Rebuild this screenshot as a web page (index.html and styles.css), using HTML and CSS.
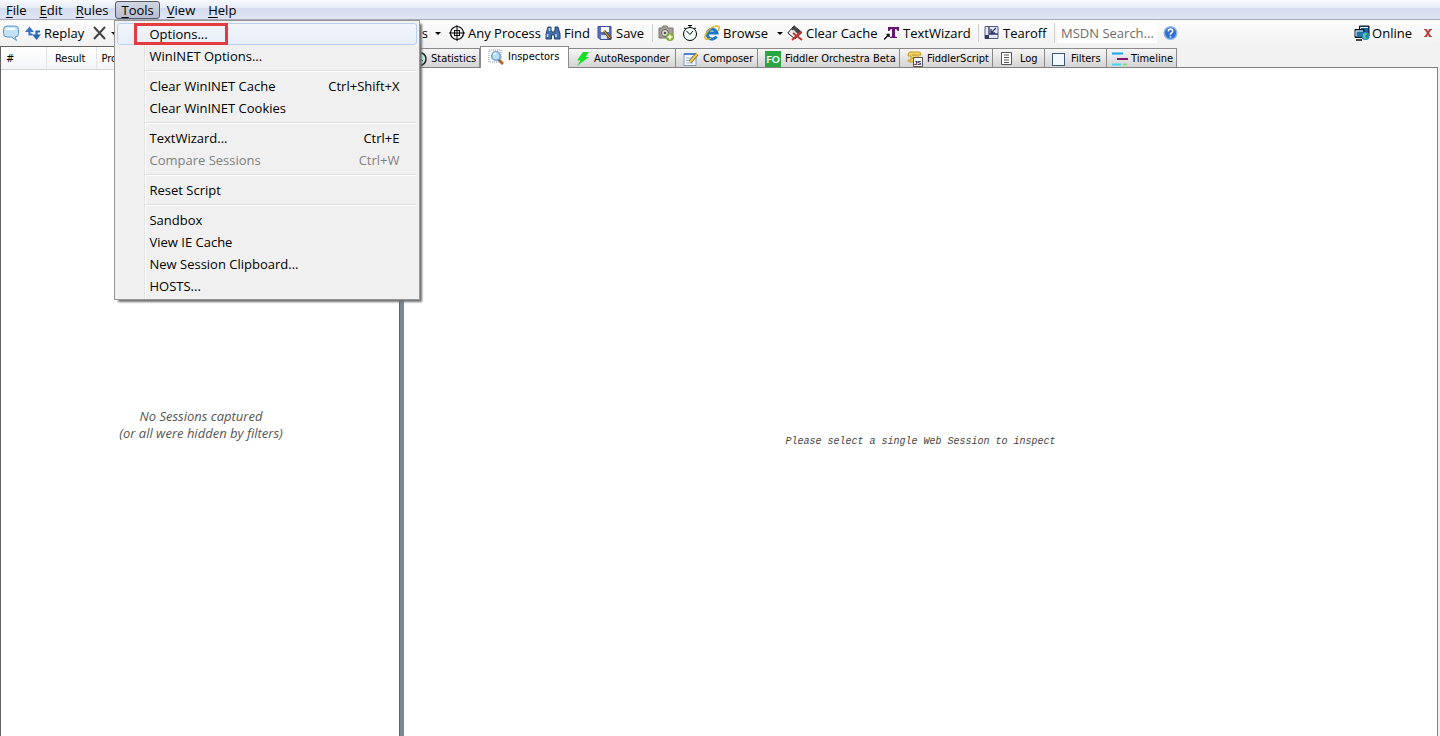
FILE: index.html
```html
<!DOCTYPE html>
<html lang="en">
<head>
<meta charset="utf-8">
<title>Fiddler</title>
<link rel="stylesheet" href="styles.css">
</head>
<body>
<div class="app">
  <nav class="menubar">
    <button class="menu"><u>F</u>ile</button>
    <button class="menu"><u>E</u>dit</button>
    <button class="menu"><u>R</u>ules</button>
    <div class="menu-host">
      <button class="menu menu-open"><u>T</u>ools</button>
      <div class="dropdown">
        <button class="item item-hot"><span>Options...</span></button>
        <button class="item"><span>WinINET Options...</span></button>
        <hr class="rule">
        <button class="item"><span>Clear WinINET Cache</span><span>Ctrl+Shift+X</span></button>
        <button class="item"><span>Clear WinINET Cookies</span></button>
        <hr class="rule">
        <button class="item"><span>TextWizard...</span><span>Ctrl+E</span></button>
        <button class="item" disabled><span>Compare Sessions</span><span>Ctrl+W</span></button>
        <hr class="rule">
        <button class="item"><span>Reset Script</span></button>
        <hr class="rule">
        <button class="item"><span>Sandbox</span></button>
        <button class="item"><span>View IE Cache</span></button>
        <button class="item"><span>New Session Clipboard...</span></button>
        <button class="item"><span>HOSTS...</span></button>
        <div class="marker"></div>
      </div>
    </div>
    <button class="menu"><u>V</u>iew</button>
    <button class="menu"><u>H</u>elp</button>
  </nav>

  <div class="toolbar">
    <button class="tool" aria-label="Comment"><svg class="icon" viewBox="0 0 16 16"><path d="M4 1h8q3.500 0 3.500 3.500v4q0 3.500-3.500 3.500l1.500 3.500L8.500 12H4Q.5 12 .5 8.500v-4Q.5 1 4 1z" fill="#c3e2fa" stroke="#5b94cc"/><path d="M3 4h9" stroke="#fff" stroke-width="2"/></svg></button>
    <button class="tool"><svg class="icon" viewBox="0 0 16 16"><path d="M0 7l4.500-5.500L9 7z" fill="#3a75c4"/><path d="M4.500 5v4.500h3" fill="none" stroke="#3a75c4" stroke-width="2.200"/><path d="M7 9.500l4.500 5.500L16 9.500z" fill="#2c67b5"/><path d="M11.500 11V6.500H15" fill="none" stroke="#2c67b5" stroke-width="2.200"/></svg>Replay</button>
    <div class="pair">
      <button class="tool" aria-label="Remove"><svg class="icon" viewBox="0 0 16 16"><path d="M2 2l11 12M13 2L2 14" stroke="#444" stroke-width="2"/></svg><i class="caret"></i></button>
      <button class="tool keep">All sessions<i class="caret"></i></button>
    </div>
    <button class="tool"><svg class="icon" viewBox="0 0 16 16"><circle cx="8" cy="8" r="6.500" fill="none" stroke="#000" stroke-width="1.200"/><path d="M8 0v16M0 8h16M5.500 5v6M10.500 5v6M5 5.500h6M5 10.500h6" stroke="#000"/></svg>Any Process</button>
    <button class="tool"><svg class="icon" viewBox="0 0 16 16"><path d="M3 2h3v3l1 2h2l1-2V2h3l2 7v5H9.500v-4h-3v4H1V9z" fill="#436fae" stroke="#24436f"/><path d="M2.500 9v3M11 9v3M4.500 3v3" stroke="#c9dcf5" stroke-width="1.500"/></svg>Find</button>
    <button class="tool"><svg class="icon" viewBox="0 0 16 16"><path d="M1 1.500h13v13H3l-2-2z" fill="#5a6ec0" stroke="#3e4d96"/><path d="M4 2h8v5H4z" fill="#fff"/><path d="M4 10h6v4H4z" fill="#dbe2f5"/><path d="M7 6l7 8" stroke="#614a25" stroke-width="3"/><path d="M7 6l6 7" stroke="#e5bd55"/></svg>Save</button>
    <button class="tool split" aria-label="Screenshot"><svg class="icon" viewBox="0 0 16 16"><path d="M1 3h3l1-2h4l1 2h5v10H1z" fill="#a5a09a" stroke="#77736e"/><circle cx="7" cy="8" r="3.500" fill="#e1dedb" stroke="#625f5c"/><circle cx="7" cy="8" r="1.300" fill="#555"/><circle cx="12" cy="12" r="4" fill="#82ad36"/><path d="M9.500 12h5M12 9.500v5" stroke="#fff" stroke-width="1.500"/></svg></button>
    <button class="tool" aria-label="Timer"><svg class="icon" viewBox="0 0 16 16"><circle cx="8" cy="9" r="6.500" fill="#f2fcf6" stroke="#000"/><path d="M6 .5h4M8 1v2M2 3l2 1M14 3l-2 1M4.500 6L8 9.500 11 6" fill="none" stroke="#000"/></svg></button>
    <button class="tool browse"><svg class="icon" viewBox="0 0 16 16"><path d="M12.500 11.500A5 5 0 1 1 13 8H4" fill="none" stroke="#1878c8" stroke-width="3"/><path d="M2 14C-2 12 6 1 13 1q4 0 1 5M2 14q2 1 5-1" fill="none" stroke="#e5b526" stroke-width="1.500"/></svg>Browse<i class="caret"></i></button>
    <button class="tool"><svg class="icon" viewBox="0 0 16 16"><path d="M7 .8L15 7.500 8 14 .8 8z" fill="#eee" stroke="#222"/><path d="M7 1l7 6-3 3-7-6z" fill="#444"/><path d="M6 5l4 4" stroke="#ddd" stroke-width="1.500"/><path d="M6 8l9 7M14 7L5 15" stroke="#c93632" stroke-width="2"/></svg>Clear Cache</button>
    <button class="tool"><svg class="icon" viewBox="0 0 16 16"><path d="M4 2h11v4h-1.500q0-2-2.500-2v7.500l2 .5v1H6v-1l2-.5V4q-2.500 0-2.500 2H4z" fill="#67156f"/><path d="M0 14.500L5 9.500M2.500 9.500H5V12" fill="none" stroke="#111" stroke-width="1.500"/></svg>TextWizard</button>
    <button class="tool split"><svg class="icon" viewBox="0 0 16 16"><path d="M1 1.500h13v12H1z" fill="#e5e8f5" stroke="#525a88"/><path d="M1 10h4v4H1z" fill="#303867"/><path d="M5 2v7h9M12 3L7 8M7 4v4h4" fill="none" stroke="#303867" stroke-width="1.300"/></svg>Tearoff</button>
    <div class="searchbox"><input class="search" type="text" aria-label="MSDN Search" placeholder="MSDN Search..."></div>
    <button class="tool" aria-label="Help"><svg class="icon" viewBox="0 0 16 16"><circle cx="7.500" cy="8" r="6.300" fill="#2e6fcf" stroke="#8db5ea" stroke-width="1.500"/><path d="M5.300 6.500Q5.300 4 7.500 4t2.200 2.300Q9.700 7.500 7.500 8.700V10M7.500 11v1.500" fill="none" stroke="#fff" stroke-width="1.500"/></svg></button>
    <div class="status">
      <button class="tool"><svg class="icon" viewBox="0 0 16 16"><path d="M5.500 1h9.500v10H5.500z" fill="#19629b" stroke="#111"/><path d="M1 4.500h9v8H1z" fill="#2173a8" stroke="#111"/><path d="M6.500 4V2.500H14M2 11V6h7" fill="none" stroke="#e8f2f8"/><path d="M2 15h6" stroke="#111" stroke-width="1.500"/><circle cx="11.500" cy="11" r="4" fill="#2385be"/><path d="M9 9q3-3 4 0l-2 2 2 3q-3 1-4-2z" fill="#5fc58a"/></svg>Online</button>
      <button class="tool" aria-label="Close"><svg class="icon-x" viewBox="0 0 8 8"><path d="M1.500 0l5 8M6.500 0l-5 8" stroke="#b8403e" stroke-width="2"/><path d="M0 .5h3M5 .5h3M0 7.500h3M5 7.500h3" stroke="#b8403e"/></svg></button>
    </div>
  </div>

  <main class="work">
    <section class="sessions">
      <table class="list"><thead><tr><th class="c-num">#</th><th class="c-res">Result</th><th>Protocol</th></tr></thead></table>
      <p class="empty">No Sessions captured<br>(or all were hidden by filters)</p>
    </section>
    <div class="splitter"></div>
    <section class="detail">
      <div class="tabs">
        <button class="tab"><svg class="icon" viewBox="0 0 16 16"><circle cx="8.500" cy="8" r="6.500" fill="#c7efe6" stroke="#222" stroke-width="1.500"/><path d="M9 3v5l3 2" fill="none" stroke="#222"/></svg>Statistics</button>
        <button class="tab tab-on"><svg class="icon" viewBox="0 0 16 16"><path d="M1 1h12v12H1z" fill="none" stroke="#8290a0" stroke-dasharray="1 1"/><path d="M10 10l5 5" stroke="#a56c38" stroke-width="3"/><circle cx="8" cy="7" r="4.300" fill="#b8def8" stroke="#6ba3d3" stroke-width="1.500"/><path d="M5.500 6q1-2 3-2" fill="none" stroke="#fff" stroke-width="1.500"/></svg>Inspectors</button>
        <button class="tab"><svg class="icon slim" viewBox="0 0 14 16"><path d="M7 1h6L9.500 6H13L1 15l3.500-5.500H1z" fill="#12df23"/></svg>AutoResponder</button>
        <button class="tab"><svg class="icon" viewBox="0 0 16 16"><path d="M1 2.500h12v12H1z" fill="#f5f9ff" stroke="#7b95bd"/><path d="M1 3h12" stroke="#4e83d0" stroke-width="2"/><path d="M3 7h5M3 9.500h3M3 12h7" stroke="#a9bad0"/><path d="M14 3L7 11" stroke="#786035" stroke-width="3.500"/><path d="M14 3L7 11" stroke="#f0cd45" stroke-width="2"/></svg>Composer</button>
        <button class="tab"><span class="fo">FO</span>Fiddler Orchestra Beta</button>
        <button class="tab"><svg class="icon" viewBox="0 0 16 16"><path d="M3 1h9q2 0 2 3h-3v7H3q-2 0-2-2h3V5H1Q1 1 3 1z" fill="#f3d35d" stroke="#c49a27"/><path d="M5 4h5M5 7h5" stroke="#b78d2c"/><path d="M6.500 6.500h9v9h-9z" fill="#fff" stroke="#555"/><text x="7" y="14" class="js">JS</text></svg>FiddlerScript</button>
        <button class="tab"><svg class="icon" viewBox="0 0 16 16"><path d="M1.500 1.500h10v12h-10z" fill="#fff" stroke="#555"/><path d="M4 4h5M4 6.500h5M4 9h5M4 11.500h5" stroke="#555"/></svg>Log</button>
        <label class="tab"><input class="check" type="checkbox">Filters</label>
        <button class="tab tab-last"><svg class="icon" viewBox="0 0 16 16"><path d="M0 2.500h11" stroke="#18a8ed" stroke-width="2"/><path d="M5 8h11" stroke="#8a146d" stroke-width="2"/><path d="M0 13.500h9" stroke="#39d9e6" stroke-width="2"/><path d="M11 13.500h4" stroke="#85df77" stroke-width="2"/></svg>Timeline</button>
      </div>
      <div class="pane"><p class="hint">Please select a single Web Session to inspect</p></div>
    </section>
  </main>
</div>
</body>
</html>
```

FILE: styles.css
```css
* { box-sizing: border-box; }
body { margin: 0; background: #fff; color: #000; font: 13px/18px "Open Sans", "Noto Sans", sans-serif; }
button { margin: 0; padding: 0; border: 0; background: none; color: inherit; font: inherit; text-align: left; white-space: nowrap; }
.app { display: flex; flex-direction: column; height: 100vh; overflow: hidden; }

.menubar { display: flex; flex: none; height: 20px; padding-top: 1px; background: linear-gradient(#f8fafe, #e6ebf6 40%, #d5dcef 45%, #dfe5f4); border-bottom: 1px solid #a5aabb; }
.menu { height: 18px; padding: 0 6px; }
.menu u { text-underline-offset: 2px; }
.menubar > .menu { margin-right: 1px; }
.menu-host { position: relative; margin-right: 1px; }
.menu-open { padding: 0 5px; line-height: 16px; background: linear-gradient(#d2d6e3, #b5bccf); border: 1px solid #555a68; border-radius: 3px; }

.dropdown { position: absolute; z-index: 2; top: 19px; left: -1px; width: 306px; padding: 2px; background: linear-gradient(90deg, #f1f1f1 29px, #e2e3e3 29px, #e2e3e3 30px, #fff 30px, #fff 31px, #f0f0f0 31px); border: 1px solid #979797; box-shadow: 3px 3px 2px -1px #707070; }
.item { display: flex; justify-content: space-between; width: 100%; height: 22px; padding: 0 17px 0 31px; border: 1px solid transparent; line-height: 20px; }
.item:disabled { color: #808080; }
.item-hot { background: linear-gradient(#f2f5fa, #e8eef7); border-color: #b8d2ee; border-radius: 3px; }
.rule { height: 2px; margin: 3px 1px 3px 28px; border: 0; border-top: 1px solid #e0e0e0; border-bottom: 1px solid #fff; }
.marker { position: absolute; top: 2px; left: 19px; width: 94px; height: 22px; border: 3px solid #e33b3f; }

.toolbar { display: grid; flex: none; grid-template-columns: 22px 67px 357px 96px 52px 55px 30px 22px 83px 97px 94px 76px 109px 20px 1fr; align-items: center; height: 26px; padding: 0 8px 0 3px; background: linear-gradient(#fdfdfd, #f1f1f1); }
.tool { display: flex; align-items: center; gap: 3px; height: 18px; }
.icon { flex: none; width: 16px; height: 16px; }
.icon-x { width: 8px; height: 8px; }
.slim { width: 14px; }
.pair { display: flex; justify-content: space-between; padding-right: 8px; }
.caret { width: 0; border: 3px solid transparent; border-top-color: #000; border-bottom: 0; }
.keep { gap: 7px; }
.browse .caret { margin-left: auto; margin-right: 4px; }
.split { padding-left: 5px; border-left: 1px solid #d0d0d0; }
.searchbox { padding-left: 2px; border-left: 1px solid #d0d0d0; }
.search { display: block; width: 100px; height: 20px; padding: 0 4px; border: 0; background: #fff; font: inherit; }
.search::placeholder { color: #6d6d6d; opacity: 1; }
.status { display: flex; justify-content: flex-end; gap: 12px; }
.status .tool { gap: 2px; }

.work { display: flex; flex: 1; min-height: 0; background: #f0f0f0; }
.sessions { display: flex; flex: none; flex-direction: column; width: 399px; background: #fff; border-top: 1px solid #646464; border-left: 1px solid #646464; }
.list { width: 100%; border-collapse: collapse; table-layout: fixed; background: linear-gradient(#fff, #f4f5f6); border-bottom: 1px solid #d5d5d5; font: 11px/22px "DejaVu Sans Condensed", "DejaVu Sans", sans-serif; }
.list th { padding: 1px 5px 0; border-right: 1px solid #e2e3e5; font-weight: 400; line-height: 21px; text-align: left; }
.list .c-num { width: 45px; }
.list .c-res { width: 50px; text-align: right; padding-right: 10px; }
.empty { margin: auto; padding: 44px 0 0 2px; color: #555; font-style: italic; line-height: 17px; text-align: center; }
.splitter { flex: none; width: 5px; background: #7a8993; border-left: 1px solid #5d666d; }

.detail { display: flex; flex: 1; flex-direction: column; min-width: 0; padding-right: 2px; }
.tabs { display: grid; flex: none; grid-template-columns: 76px 89px 107px 82px 142px 93px 52px 62px 70px; align-items: end; height: 21px; background: #f2f2f2; font: 11px/18px "DejaVu Sans Condensed", "DejaVu Sans", sans-serif; }
.tab { display: flex; align-items: center; gap: 4px; height: 19px; padding: 2px 0 0 7px; background: linear-gradient(#f6f6f6, #d4d4d4); border: 1px solid #8a8a8a; border-width: 1px 1px 0 0; white-space: nowrap; }
.tab-on { z-index: 1; height: 22px; margin-bottom: -1px; padding-bottom: 3px; background: #fff; border-left-width: 1px; }
.tab-last { gap: 3px; padding-left: 5px; }
.fo { width: 16px; height: 16px; background: #29a745; color: #fff; font: 700 10px/16px Lato, sans-serif; text-align: center; }
.js { font: 700 6px "Liberation Sans", sans-serif; }
.check { appearance: none; width: 13px; height: 13px; margin: 0 2px 0 0; border: 1px solid #3c5574; background: #f4f8fb; }
.pane { display: flex; flex: 1; border: 1px solid #828282; border-bottom: 0; border-left: 0; background: #fff; }
.hint { margin: auto; padding-top: 80px; color: #444; font: italic 10px/14px "Liberation Mono", monospace; }
```
